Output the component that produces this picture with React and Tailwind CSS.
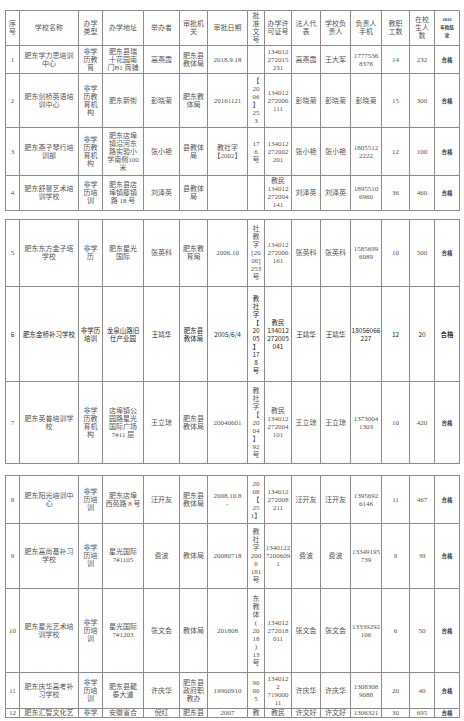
const widths = ["w-[14px]", "w-[59px]", "w-[24px]", "w-[41px]", "w-[36px]", "w-[28px]", "w-[40px]", "w-[17px]", "w-[27px]", "w-[29px]", "w-[30px]", "w-[31px]", "w-[28px]", "w-[25px]", "w-[25px]"];

const header = ["序\n号", "学校名称", "办学\n类型", "办学地址", "举办者", "审批机\n关", "审批日期", "批\n准\n文\n号", "办学许\n可证号", "法人代\n表", "学校负\n责人", "负责人\n手机", "教职\n工数", "在校\n生人\n数", "2016\n年检结\n论"];

const table1 = [
  { h: "h-[28px]", c: ["1", "肥东学力思培训\n中心", "非学\n历教\n育", "肥东县瑞\n十花园南\n门B1 商铺", "高燕霞", "肥东县\n教体局", "2018.9.18", "", "134012\n272015\n231", "高燕霞", "王大军", "1777536\n8376", "14", "232", "合格"] },
  { h: "h-[54px]", c: ["2", "肥东剑桥英语培\n训中心", "非学\n历教\n育机\n构", "肥东新街", "彭晓菊", "肥东教\n体局", "20161121", "【\n20\n06\n】\n25\n3", "134012\n272006\n111", "彭晓菊", "彭晓菊", "彭晓菊", "15", "300", "合格"] },
  { h: "h-[48px]", c: ["3", "肥东燕子琴行培\n训部", "非学\n历教\n育机\n构", "肥东店埠\n镇沿河东\n路实验小\n学南侧100\n米", "张小艳", "县教体\n局", "教社字\n【2002】", "17\n6\n号", "134012\n272002\n201", "张小艳", "张小艳", "1805512\n2222", "12", "100", "合格"] },
  { h: "h-[35px]", c: ["4", "肥东舒曼艺术培\n训学校", "非学\n历培\n训", "肥东县店\n埠镇藤镇\n路 18 号", "刘泽英", "县教体\n局", "", "", "教民\n134012\n272004\n141", "刘泽英", "刘泽英", "1895510\n6960", "36", "460", "合格"] },
];

const table2 = [
  { h: "h-[67px]", c: ["5", "肥东东方金子塔\n学校", "非学\n历", "肥东星光\n国际", "张英科", "肥东教\n育局", "2006.10", "社\n教\n字\n[20\n06]\n253\n号", "134012\n272006\n161", "张英科", "张英科", "1585699\n6089", "10", "500", "合格"] },
  { h: "h-[95px]", sans: true, c: ["6", "肥东金桥补习学校", "非学历\n培训", "龙泉山路旧\n仕产业园", "王靖华", "肥东县\n教体局", "2005/6/4", "教\n社\n字\n【\n20\n05\n】\n17\n8\n号", "教民\n134012\n272005\n041", "王靖华", "王靖华", "18056066\n227", "12", "20", "合格"] },
  { h: "h-[82px]", c: ["7", "肥东英普培训学\n校", "非学\n历教\n育机\n构", "店埠镇公\n园路星光\n国际广场\n7#11 层", "王立琼", "肥东县\n教体局", "20040601", "教\n社\n字\n【\n20\n04\n】\n92\n号", "教民\n134012\n272004\n101", "王立琼", "王立琼", "1373004\n1303", "10", "420", "合格"] },
];

const table3 = [
  { h: "h-[48px]", c: ["8", "肥东阳光培训中\n心", "非学\n历培\n训", "肥东店埠\n西苑路 8 号", "汪开友", "肥东县\n教体局", "2008.10.8\n-", "20\n08\n【\n25\n1】", "134012\n272008\n211", "汪开友", "汪开友", "1395692\n6146", "11", "467", "合格"] },
  { h: "h-[65px]", c: ["9", "肥东高尚基补习\n学校", "非学\n历培\n训", "星光国际\n7#1105", "费波", "教体局", "20080718", "教\n社\n字\n200\n6\n181\n号", "1340122\n7200609\n1", "费波", "费波", "13349195\n739", "9", "39", "合格"] },
  { h: "h-[84px]", c: ["10", "肥东星光艺术培\n训学校", "非学\n历培\n训", "星光国际\n7#1203", "张文会", "教体局", "201808", "东\n教\n体\n(\n20\n18\n)\n13\n号", "134012\n272018\n011", "张文会", "张文会", "13339292\n106", "6", "50", "合格"] },
  { h: "h-[36px]", c: ["11", "肥东庆华高考补\n习学校", "非学\n历培\n训", "肥东县龍\n泰大道", "许庆华", "肥东县\n政府职\n教办", "19900910", "90\n00\n5", "134012\n2\n719000\n11", "许庆华", "许庆华", "1308308\n9088", "20", "40", "合格"] },
  { h: "h-[8px]", c: ["12", "肥东汇智文化艺", "非学", "安徽省合", "倪红", "肥东县", "2007", "教", "教民", "许文好", "许文好", "1306321", "30", "695", "合格"] },
];

function Cols() {
  return (
    <colgroup>
      {widths.map((w, i) => (
        <col key={i} className={w} />
      ))}
    </colgroup>
  );
}

function Row({ row }) {
  return (
    <tr className={row.h}>
      {row.c.map((t, i) => (
        <td
          key={i}
          className={
            "border border-[#8c8c8c] p-0 text-center align-middle whitespace-pre-line leading-[8px] " +
            (row.sans ? "text-[6.5px] text-[#2a2a2a] font-['Noto_Sans_CJK_SC',sans-serif] " : "") +
            (i === 14 ? "text-[5.5px] font-bold text-[#333]" : "")
          }
        >
          {t}
        </td>
      ))}
    </tr>
  );
}

function Sheet({ rows, head }) {
  return (
    <table className="table-fixed border-collapse w-[454px] bg-white">
      <Cols />
      <tbody>
        {head && (
          <tr className="h-[35px]">
            {header.map((t, i) => (
              <td
                key={i}
                className={
                  "border border-[#8c8c8c] p-0 text-center align-middle whitespace-pre-line leading-[8px] " +
                  (i === 14 ? "text-[4.5px] leading-[6px] font-bold text-[#333]" : "")
                }
              >
                {t}
              </td>
            ))}
          </tr>
        )}
        {rows.map((r, i) => (
          <Row key={i} row={r} />
        ))}
      </tbody>
    </table>
  );
}

export default function App() {
  return (
    <div className="w-[464px] h-[721px] overflow-hidden bg-white px-[5px] pt-[10px] text-[7px] text-[#555] font-['Liberation_Serif','Noto_Sans_CJK_SC',serif]">
      <div className="flex flex-col gap-[8px]">
        <Sheet rows={table1} head />
        <Sheet rows={table2} />
        <div className="mt-[3px]">
          <Sheet rows={table3} />
        </div>
      </div>
    </div>
  );
}
